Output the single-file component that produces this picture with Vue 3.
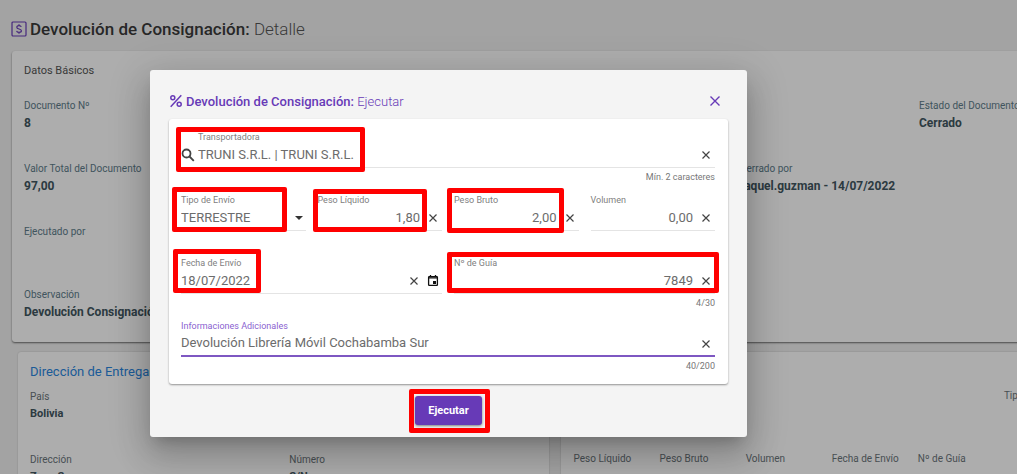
<script setup>
import { ref } from 'vue'

const details = [
  { label: 'Documento Nº', value: '8' },
  null, null, null, null,
  { label: 'Estado del Documento', value: 'Cerrado' },
  { label: 'Valor Total del Documento', value: '97,00' },
  null, null, null,
  { label: 'Cerrado por', value: 'raquel.guzman - 14/07/2022', wide: true },
  { label: 'Ejecutado por', value: '', full: true },
  { label: 'Observación', value: 'Devolución Consignación', full: true },
]
const shipping = ['Peso Líquido', 'Peso Bruto', 'Volumen', 'Fecha de Envío', 'Nº de Guía']

const carrier = ref('TRUNI S.R.L. | TRUNI S.R.L.')
const mode = ref('TERRESTRE')
const netWeight = ref('1,80')
const grossWeight = ref('2,00')
const volume = ref('0,00')
const date = ref('18/07/2022')
const guide = ref('7849')
const notes = ref('Devolución Librería Móvil Cochabamba Sur')
</script>

<template>
  <div class="page">
    <main class="content">
      <h1 class="page-title">
        <svg class="title-icon" viewBox="0 0 16 16" aria-hidden="true">
          <rect x="1" y="1" width="14" height="14" rx="1" />
          <path d="M10.300 5.900C10 5 9.200 4.600 8 4.600c-1.300 0-2.200.6-2.200 1.600 0 2.400 4.600 1.200 4.600 3.600 0 1-1 1.600-2.400 1.600-1.300 0-2.200-.5-2.400-1.500M8 3.200v1.400M8 11.400v1.400" />
        </svg>
        <span>Devolución de Consignación: <span class="light">Detalle</span></span>
      </h1>

      <section class="card basics">
        <h2>Datos Básicos</h2>
        <div class="details">
          <div v-for="(d, i) in details" :key="i" :class="{ wide: d?.wide, full: d?.full }">
            <template v-if="d">
              <div class="caption">{{ d.label }}</div>
              <div class="value">{{ d.value }}</div>
            </template>
          </div>
        </div>
      </section>

      <div class="lower">
        <section class="card address">
          <h2>Dirección de Entrega</h2>
          <div class="address-grid">
            <div class="full"><div class="caption">País</div><div class="value">Bolivia</div></div>
            <div><div class="caption">Dirección</div><div class="value">Zona Sur</div></div>
            <div><div class="caption">Número</div><div class="value">S/N</div></div>
          </div>
        </section>
        <section class="card shipping">
          <div class="caption type">Tipo de Envío</div>
          <div v-for="s in shipping" :key="s" class="caption">{{ s }}</div>
        </section>
      </div>
    </main>

    <div class="backdrop">
      <form class="dialog" role="dialog" aria-labelledby="dialog-title" @submit.prevent>
        <header>
          <svg class="percent" viewBox="0 0 14 14" aria-hidden="true">
            <circle cx="3.800" cy="3.800" r="2" /><circle cx="10.200" cy="10.200" r="2" /><path d="M12.300 1.200 1.700 12.800" />
          </svg>
          <h2 id="dialog-title">Devolución de Consignación: <span class="light">Ejecutar</span></h2>
          <button type="button" class="icon-button close" aria-label="Cerrar">
            <svg viewBox="0 0 18 18"><path d="m4.500 4.500 9 9m0-9-9 9" /></svg>
          </button>
        </header>

        <div class="form-card">
          <div class="field span-4 with-search">
            <label for="carrier">Transportadora</label>
            <div class="control">
              <svg class="search" viewBox="0 0 14 14" aria-hidden="true"><circle cx="5.500" cy="5.500" r="4" /><path d="m8.500 8.500 4.300 4.300" /></svg>
              <input id="carrier" v-model="carrier" type="text">
              <button type="button" class="icon-button" aria-label="Borrar transportadora" @click="carrier = ''"><svg viewBox="0 0 18 18"><path d="m5.500 5.500 7 7m0-7-7 7" /></svg></button>
            </div>
            <div class="hint">Mín. 2 caracteres</div>
            <span class="mark mark-carrier"></span>
          </div>

          <div class="field">
            <label for="mode">Tipo de Envío</label>
            <div class="control">
              <select id="mode" v-model="mode"><option>TERRESTRE</option></select>
              <svg class="arrow" viewBox="0 0 14 14" aria-hidden="true"><path d="M3 5h8L7 9z" /></svg>
            </div>
            <span class="mark mark-mode"></span>
          </div>
          <div class="field number">
            <label for="net">Peso Líquido</label>
            <div class="control">
              <input id="net" v-model="netWeight" type="text">
              <button type="button" class="icon-button" aria-label="Borrar peso líquido" @click="netWeight = ''"><svg viewBox="0 0 18 18"><path d="m5.500 5.500 7 7m0-7-7 7" /></svg></button>
            </div>
            <span class="mark mark-net"></span>
          </div>
          <div class="field number">
            <label for="gross">Peso Bruto</label>
            <div class="control">
              <input id="gross" v-model="grossWeight" type="text">
              <button type="button" class="icon-button" aria-label="Borrar peso bruto" @click="grossWeight = ''"><svg viewBox="0 0 18 18"><path d="m5.500 5.500 7 7m0-7-7 7" /></svg></button>
            </div>
            <span class="mark mark-gross"></span>
          </div>
          <div class="field number">
            <label for="volume">Volumen</label>
            <div class="control">
              <input id="volume" v-model="volume" type="text">
              <button type="button" class="icon-button" aria-label="Borrar volumen" @click="volume = ''"><svg viewBox="0 0 18 18"><path d="m5.500 5.500 7 7m0-7-7 7" /></svg></button>
            </div>
          </div>

          <div class="field span-2">
            <label for="date">Fecha de Envío</label>
            <div class="control">
              <input id="date" v-model="date" type="text">
              <button type="button" class="icon-button" aria-label="Borrar fecha" @click="date = ''"><svg viewBox="0 0 18 18"><path d="m5.500 5.500 7 7m0-7-7 7" /></svg></button>
              <button type="button" class="icon-button calendar" aria-label="Elegir fecha">
                <svg viewBox="0 0 18 18"><rect x="4.600" y="4.600" width="8.800" height="8.800" rx=".6" /><path d="M4.600 5.800h8.800M6.500 3V5M11.500 3V5" /><path class="solid" d="M9 9h3v3H9z" /></svg>
              </button>
            </div>
            <span class="mark mark-date"></span>
          </div>
          <div class="field span-2 number">
            <label for="guide">Nº de Guía</label>
            <div class="control">
              <input id="guide" v-model="guide" type="text" maxlength="30">
              <button type="button" class="icon-button" aria-label="Borrar guía" @click="guide = ''"><svg viewBox="0 0 18 18"><path d="m5.500 5.500 7 7m0-7-7 7" /></svg></button>
            </div>
            <div class="hint">{{ guide.length }}/30</div>
            <span class="mark mark-guide"></span>
          </div>

          <div class="field span-4 active">
            <label for="notes">Informaciones Adicionales</label>
            <div class="control">
              <input id="notes" v-model="notes" type="text" maxlength="200">
              <button type="button" class="icon-button" aria-label="Borrar informaciones" @click="notes = ''"><svg viewBox="0 0 18 18"><path d="m5.500 5.500 7 7m0-7-7 7" /></svg></button>
            </div>
            <div class="hint">{{ notes.length }}/200</div>
          </div>
        </div>

        <footer>
          <div class="action">
            <button type="submit" class="submit">Ejecutar</button>
            <span class="mark mark-submit"></span>
          </div>
        </footer>
      </form>
    </div>
  </div>
</template>

<style>
body {
  background: #f1f1f1;
}
</style>

<style scoped>
* {
  box-sizing: border-box;
}

.page {
  position: relative;
  height: 100vh;
  overflow: hidden;
  font-family: Roboto, "Liberation Sans", sans-serif;
  font-size: 13px;
  color: #425660;
}

h1,
h2 {
  margin: 0;
  font-weight: 400;
}

/* The record extends past the right edge of the window. */
.content {
  width: calc(100% + 93px);
  padding: 17px 0 0 11px;
}

.page-title {
  display: flex;
  align-items: center;
  gap: 3px;
  height: 24px;
  margin-bottom: 10px;
  font-size: 17px;
  font-weight: 500;
  color: #3a3a3a;
}

.page-title .light {
  font-weight: 300;
  color: #555;
}

.title-icon {
  width: 16px;
  height: 16px;
  fill: none;
  stroke: #673ab7;
  stroke-width: 1.2;
}

.card {
  background: #fff;
  border-radius: 3px;
  box-shadow: 0 1px 2px rgba(0, 0, 0, 0.55);
}

.basics {
  height: 291px;
  margin-left: 1px;
  padding: 12px;
}

.basics h2 {
  margin-bottom: 19px;
  font-size: 11px;
  line-height: 16px;
  color: #555;
}

.details {
  display: grid;
  grid-template-columns: repeat(6, 1fr);
  grid-auto-rows: 63px;
}

.wide {
  grid-column: span 2;
}

.full {
  grid-column: 1 / -1;
}

.caption {
  font-size: 10px;
  line-height: 16px;
  color: #607d8b;
  white-space: nowrap;
}

.value {
  font-size: 12px;
  font-weight: 700;
  line-height: 18px;
}

.lower {
  display: grid;
  grid-template-columns: 1fr 1fr;
  margin: 10px 7px 0;
}

.lower .card {
  height: 180px;
  box-shadow: 0 0 2px rgba(0, 0, 0, 0.2);
}

.lower .caption {
  color: #6b757a;
}

.address {
  margin-right: 12px;
  padding: 12px 0 0 12px;
}

.address h2 {
  margin-bottom: 9px;
  font-size: 13px;
  line-height: 16px;
  color: #2a86e0;
}

.address-grid {
  display: grid;
  grid-template-columns: 1fr 1fr;
  grid-auto-rows: 63px;
}

.address .value {
  font-size: 11px;
}

.shipping {
  display: grid;
  grid-template-columns: repeat(6, 1fr);
  grid-auto-rows: 63px;
  padding: 36px 13px 0;
}

.type {
  grid-column: 6;
}

.backdrop {
  position: absolute;
  inset: 0;
  display: flex;
  justify-content: center;
  align-items: flex-start;
  padding: 70px 120px 0 0;
  background: rgba(0, 0, 0, 0.32);
}

.dialog {
  width: 100%;
  max-width: 597px;
  padding: 18px 19px 4px;
  background: #f4f4f4;
  border-radius: 3px;
  color: #666;
  box-shadow: 0 9px 13px -6px rgba(0, 0, 0, 0.2), 0 20px 32px 3px rgba(0, 0, 0, 0.14), 0 8px 39px 7px rgba(0, 0, 0, 0.12);
}

header {
  display: flex;
  align-items: center;
  height: 26px;
  margin-bottom: 5px;
  padding-right: 4px;
  color: #673ab7;
}

header h2 {
  flex: 1;
  margin-left: 3px;
  font-size: 13px;
  font-weight: 500;
}

header .light {
  font-weight: 300;
}

.percent {
  width: 14px;
  height: 14px;
  fill: none;
  stroke: currentColor;
  stroke-width: 1.5;
}

.icon-button {
  flex: none;
  width: 18px;
  height: 18px;
  padding: 0;
  border: 0;
  background: none;
  color: #444;
}

.icon-button svg {
  display: block;
  width: 18px;
  height: 18px;
  fill: none;
  stroke: currentColor;
  stroke-width: 1.2;
}

.close {
  color: #673ab7;
}

.close svg {
  stroke-width: 1.4;
}

.calendar {
  margin-left: 1px;
  color: #111;
}

.calendar svg {
  stroke-width: 1.3;
}

.calendar .solid {
  fill: currentColor;
  stroke: none;
}

.form-card {
  display: grid;
  grid-template-columns: repeat(4, 1fr);
  grid-auto-rows: 63px;
  column-gap: 12px;
  padding: 12px 13px 1px 12px;
  background: #fff;
  border-radius: 3px;
  box-shadow: 0 1px 2px rgba(0, 0, 0, 0.4);
}

.field {
  position: relative;
  min-width: 0;
}

.span-2 {
  grid-column: span 2;
}

.span-4 {
  grid-column: span 4;
}

label {
  display: block;
  font-size: 9px;
  line-height: 12px;
  color: #808080;
}

.with-search label {
  padding-left: 17px;
}

.control {
  display: flex;
  align-items: center;
  height: 25px;
  border-bottom: 1px solid #e4e4e4;
}

input,
select {
  flex: 1;
  min-width: 0;
  width: 100%;
  height: 24px;
  margin: 0;
  padding: 0 0 2px;
  border: 0;
  outline: 0;
  appearance: none;
  background: none;
  font-family: inherit;
  font-size: 13px;
  color: #6c6c6c;
}

.number input {
  padding-right: 4px;
  text-align: right;
}

.search {
  width: 14px;
  height: 14px;
  margin-right: 3px;
  fill: none;
  stroke: #444;
  stroke-width: 1.8;
}

.arrow {
  width: 14px;
  height: 14px;
  fill: #333;
}

.hint {
  margin-top: 3px;
  font-size: 9px;
  line-height: 12px;
  text-align: right;
  color: #777;
}

.active label {
  color: #8a5fd0;
}

.active .control {
  border-bottom: 2px solid #7e57c2;
}

footer {
  display: flex;
  justify-content: center;
  padding: 12px 0 8px;
}

.action {
  position: relative;
}

.submit {
  display: block;
  width: 67px;
  height: 29px;
  padding: 0;
  border: 0;
  border-radius: 3px;
  background: #673ab7;
  color: #fff;
  font-family: inherit;
  font-size: 11px;
  font-weight: 700;
  box-shadow: 0 1px 3px rgba(0, 0, 0, 0.5);
}

/* Instruction outlines laid over the fields to fill in. */
.mark {
  position: absolute;
  border: 5px solid #f00;
  border-radius: 2px;
  pointer-events: none;
}

.mark-carrier {
  left: -5px;
  top: -4px;
  width: 189px;
  height: 45px;
}

.mark-mode {
  left: -9px;
  top: -7px;
  width: 115px;
  height: 45px;
}

.mark-net {
  left: -5px;
  top: -5px;
  width: 114px;
  height: 43px;
}

.mark-gross {
  left: -7px;
  top: -6px;
  width: 117px;
  height: 45px;
}

.mark-date {
  left: -8px;
  top: -8px;
  width: 88px;
  height: 44px;
}

.mark-guide {
  left: -7px;
  right: -4px;
  top: -5px;
  height: 41px;
}

.mark-submit {
  inset: -7px -8px -8px -6px;
}
</style>
